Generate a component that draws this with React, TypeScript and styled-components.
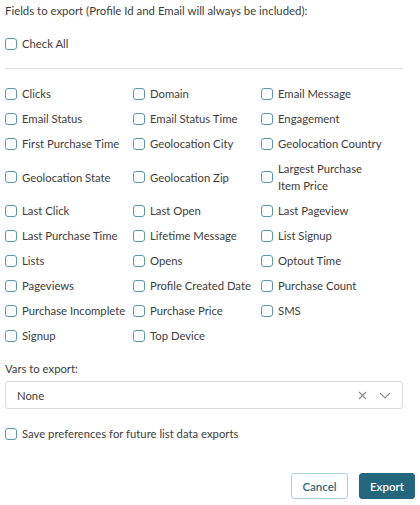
import styled, { createGlobalStyle } from 'styled-components';

const GlobalStyle = createGlobalStyle`
  body {
    margin: 0;
    background: #ffffff;
    font-family: Lato, 'Liberation Sans', sans-serif;
    color: #3a3a3a;
  }
`;

const Page = styled.div`
  width: 420px;
  padding: 2px 5px 0 5px;
  box-sizing: border-box;
`;

const Content = styled.div`
  width: 398px;
`;

const Heading = styled.div`
  font-size: 11.4px;
  line-height: 17px;
  color: #3d3d3d;
`;

const CheckAllRow = styled.div`
  margin-top: 16px;
`;

const Divider = styled.hr`
  border: none;
  border-top: 1px solid #e2e2e2;
  margin: 16px 0 16px 0;
`;

const FieldGrid = styled.div`
  display: grid;
  grid-template-columns: 128px 128px 128px;
  row-gap: 8px;
`;

const Item = styled.label`
  display: flex;
  align-items: center;
  gap: 5px;
  font-size: 11.3px;
  line-height: 17px;
  color: #3d3d3d;
`;

const Box = styled.span`
  flex: 0 0 auto;
  width: 10px;
  height: 10px;
  border: 1.2px solid #5f96a9;
  border-radius: 3px;
  background: #fff;
`;

const ItemText = styled.span`
  white-space: pre-line;
`;

const SectionLabel = styled.div`
  margin-top: 16px;
  font-size: 11.3px;
  line-height: 17px;
  color: #3d3d3d;
`;

const Select = styled.div`
  margin-top: 4px;
  height: 28px;
  box-sizing: border-box;
  border: 1px solid #dadada;
  border-radius: 3px;
  display: flex;
  align-items: center;
  padding: 0 11px 0 11px;
  font-size: 11.3px;
  color: #3d3d3d;
`;

const SelectValue = styled.span`
  flex: 1;
`;

const SelectIcons = styled.span`
  display: flex;
  align-items: center;
  gap: 12px;
`;

const SaveRow = styled.div`
  margin-top: 16px;
`;

const Footer = styled.div`
  display: flex;
  justify-content: flex-end;
  gap: 11px;
  margin-top: 31px;
  margin-right: -12px;
`;

const Button = styled.button<{ $primary?: boolean }>`
  height: 26px;
  padding: 0;
  width: ${(p) => (p.$primary ? '56px' : '57px')};
  border-radius: 3px;
  font-family: Lato, 'Liberation Sans', sans-serif;
  font-size: 11.5px;
  font-weight: 600;
  border: 1px solid ${(p) => (p.$primary ? '#24667b' : '#a9d1dc')};
  background: ${(p) => (p.$primary ? '#24667b' : '#ffffff')};
  color: ${(p) => (p.$primary ? '#ffffff' : '#2f6a7e')};
`;

const fields = [
  'Clicks',
  'Domain',
  'Email Message',
  'Email Status',
  'Email Status Time',
  'Engagement',
  'First Purchase Time',
  'Geolocation City',
  'Geolocation Country',
  'Geolocation State',
  'Geolocation Zip',
  'Largest Purchase\nItem Price',
  'Last Click',
  'Last Open',
  'Last Pageview',
  'Last Purchase Time',
  'Lifetime Message',
  'List Signup',
  'Lists',
  'Opens',
  'Optout Time',
  'Pageviews',
  'Profile Created Date',
  'Purchase Count',
  'Purchase Incomplete',
  'Purchase Price',
  'SMS',
  'Signup',
  'Top Device',
];

const Check = ({ label }: { label: string }) => (
  <Item>
    <Box />
    <ItemText>{label}</ItemText>
  </Item>
);

const App = () => {
  return (
    <>
      <GlobalStyle />
      <Page>
        <Content>
          <Heading>Fields to export (Profile Id and Email will always be included):</Heading>
          <CheckAllRow>
            <Check label="Check All" />
          </CheckAllRow>
          <Divider />
          <FieldGrid>
            {fields.map((f) => (
              <Check key={f} label={f} />
            ))}
          </FieldGrid>
          <SectionLabel>Vars to export:</SectionLabel>
          <Select>
            <SelectValue>None</SelectValue>
            <SelectIcons>
              <svg width="9" height="9" viewBox="0 0 9 9">
                <path d="M1 1L8 8M8 1L1 8" stroke="#8a8a8a" strokeWidth="1.1" fill="none" />
              </svg>
              <svg width="12" height="7" viewBox="0 0 12 7">
                <path d="M1 1L6 6L11 1" stroke="#8a8a8a" strokeWidth="1.1" fill="none" />
              </svg>
            </SelectIcons>
          </Select>
          <SaveRow>
            <Check label="Save preferences for future list data exports" />
          </SaveRow>
          <Footer>
            <Button>Cancel</Button>
            <Button $primary>Export</Button>
          </Footer>
        </Content>
      </Page>
    </>
  );
};

export default App;
